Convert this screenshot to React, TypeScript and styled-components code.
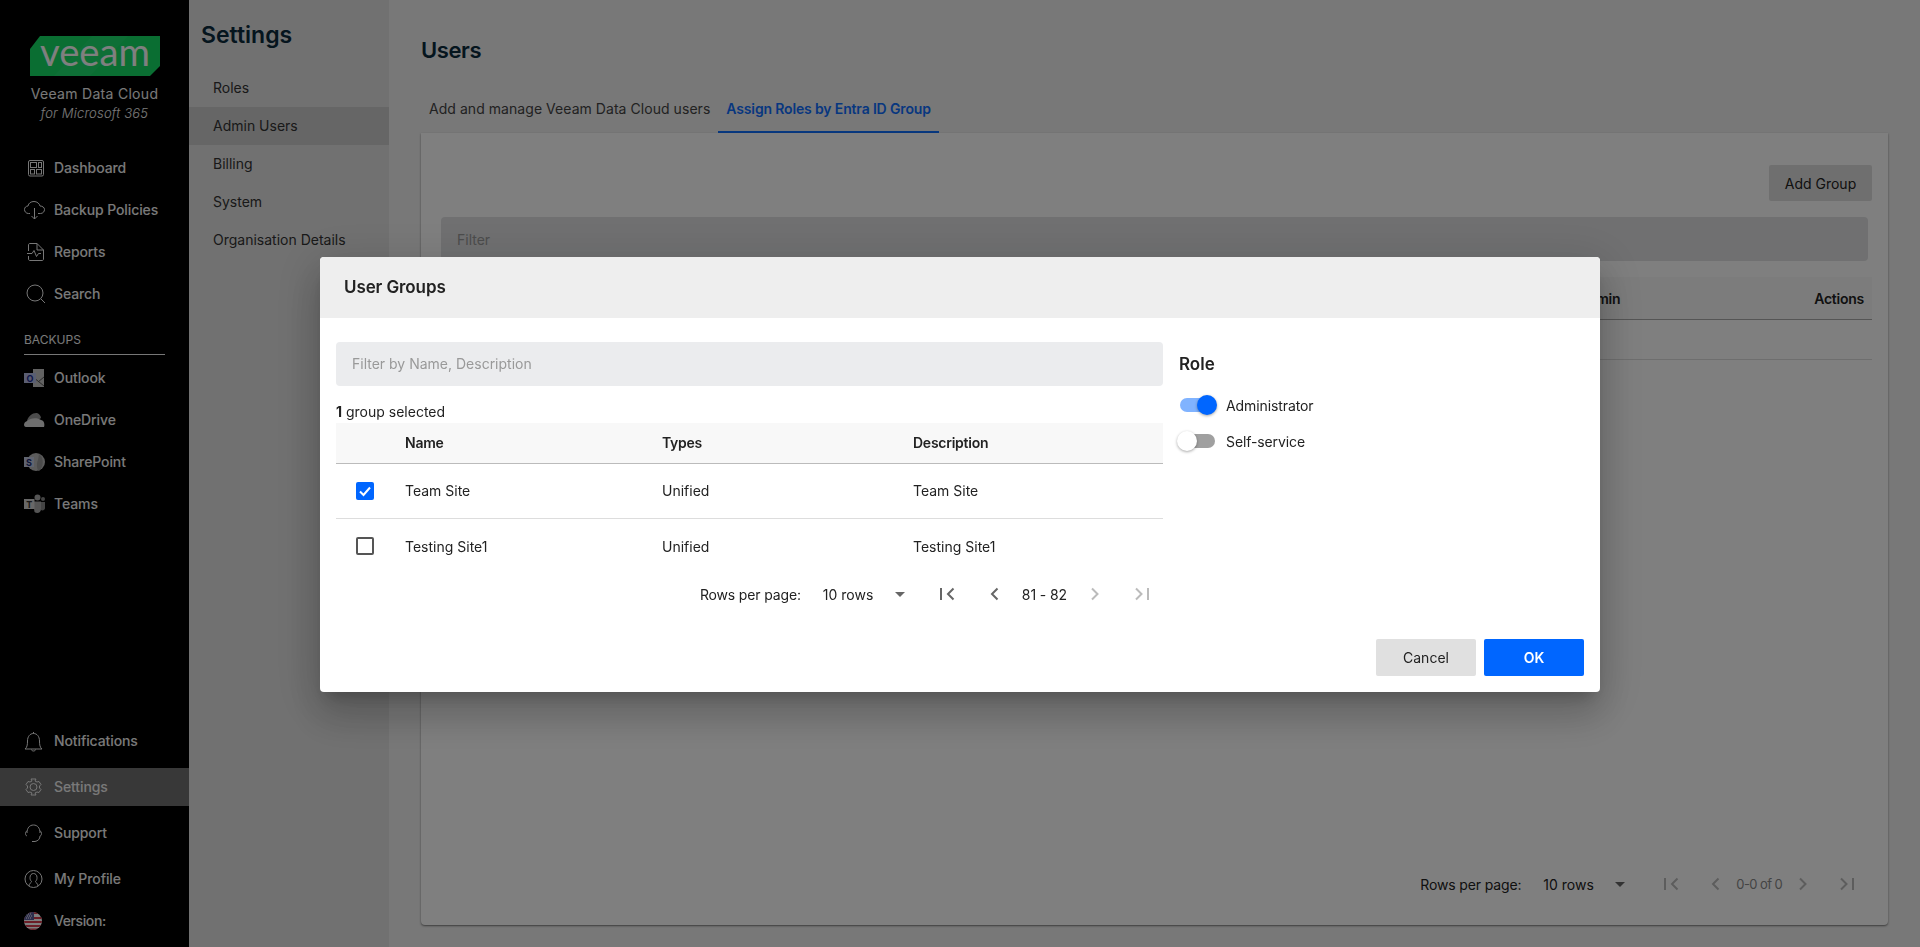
import React from 'react'
import styled, { createGlobalStyle } from 'styled-components'

const GlobalStyle = createGlobalStyle`
  html, body, #root {
    height: 100%;
    margin: 0;
  }
  body {
    overflow: hidden;
    font-family: Inter, "Noto Sans", "Liberation Sans", sans-serif;
    font-size: 14px;
    color: #222;
  }
  * {
    box-sizing: border-box;
  }
`

const Shell = styled.div`
  display: flex;
  height: 947px;
  background: #f0f0f0;
`

/* left black rail */
const Sidebar = styled.nav`
  display: flex;
  flex-direction: column;
  flex: 0 0 189px;
  background: #000;
  color: #f2f2f2;
`
const Brand = styled.div`
  display: flex;
  flex-direction: column;
  align-items: center;
  height: 147px;
  padding-top: 36px;
`
const LogoMark = styled.svg`
  display: block;
  overflow: visible;
`
const BrandTitle = styled.div`
  margin-top: 9px;
  font-size: 14px;
  line-height: 18px;
  letter-spacing: 0.3px;
`
const BrandSub = styled.div`
  font-size: 13px;
  line-height: 20px;
  font-style: italic;
  font-weight: 300;
  letter-spacing: 0.2px;
`
const NavRow = styled.a<{ $active?: boolean }>`
  display: flex;
  align-items: center;
  height: ${p => (p.$active ? '38px' : '42px')};
  padding: 0 0 1px 24px;
  font-size: 14px;
  font-weight: 500;
  letter-spacing: -0.1px;
  background: ${p => (p.$active ? '#707070' : 'transparent')};
`
const NavIcon = styled.span`
  display: flex;
  flex: 0 0 30px;
  svg {
    display: block;
    fill: none;
    stroke: #eee;
    stroke-width: 1;
  }
`
const SectionLabel = styled.div`
  display: flex;
  align-items: flex-end;
  height: 40px;
  margin: 0 24px 2px;
  padding-bottom: 6px;
  border-bottom: 1px solid #eee;
  font-size: 12px;
  line-height: 16px;
`
const BottomNav = styled.div`
  display: flex;
  flex-direction: column;
  gap: 8px;
  margin-top: auto;
  padding-bottom: 7px;
  ${NavRow} {
    height: 38px;
  }
`
const VersionRow = styled(NavRow)`
  margin-top: -4px;
  letter-spacing: -0.4px;
`

/* settings sub nav */
const SubNav = styled.aside`
  flex: 0 0 200px;
  background: #e2e2e2;
`
const SubTitle = styled.h2`
  height: 69px;
  margin: 0;
  padding: 19px 0 0 12px;
  font-size: 23px;
  line-height: 32px;
  font-weight: 600;
  color: #0a2a3c;
`
const SubItem = styled.div<{ $active?: boolean }>`
  display: flex;
  align-items: center;
  height: 38px;
  padding: 0 0 2px 24px;
  color: #333;
  background: ${p => (p.$active ? '#cccccc' : 'transparent')};
`

/* page body behind the dialog */
const Main = styled.main`
  display: flex;
  flex-direction: column;
  flex: 1;
  min-width: 0;
  padding: 35px 32px 22px 32px;
`
const PageTitle = styled.h1`
  height: 32px;
  margin: 0 0 18px;
  padding-bottom: 1px;
  font-size: 22px;
  line-height: 31px;
  font-weight: 600;
  letter-spacing: -0.4px;
  color: #0a2a3c;
`
const Tabs = styled.div`
  display: flex;
`
const Tab = styled.div<{ $active?: boolean }>`
  display: flex;
  align-items: center;
  height: 48px;
  padding: 0 8px;
  font-weight: ${p => (p.$active ? 600 : 400)};
  letter-spacing: ${p => (p.$active ? '-0.15px' : '0.05px')};
  color: ${p => (p.$active ? '#0f6fff' : '#444')};
  border-bottom: 2px solid ${p => (p.$active ? '#0f70ff' : 'transparent')};
`
const Card = styled.section`
  display: flex;
  flex-direction: column;
  flex: 1;
  padding: 32px 16px 0 20px;
  background: #fff;
  border-radius: 0 0 4px 4px;
  box-shadow: 0 1px 2px rgba(0, 0, 0, 0.5);
`
const CardActions = styled.div`
  display: flex;
  justify-content: flex-end;
`
const GhostButton = styled.button`
  width: 103px;
  height: 36px;
  border: 0;
  border-radius: 2px;
  background: #dfdfdf;
  font: inherit;
  color: #222;
`
const PageFilter = styled.div`
  display: flex;
  align-items: center;
  height: 44px;
  margin: 16px 4px 16px 0;
  padding-left: 16px;
  border-radius: 4px;
  background: #e0e1e3;
  color: #999;
`
const PageTableHead = styled.div`
  display: flex;
  justify-content: flex-end;
  align-items: center;
  gap: 194px;
  height: 43px;
  padding-right: 8px;
  background: #f8f8f8;
  border-bottom: 1px solid #aaa;
  font-weight: 600;
  letter-spacing: -0.25px;
`
const PageTableRow = styled.div`
  height: 40px;
  border-bottom: 1px solid #ddd;
`
const CardFooter = styled.div`
  display: flex;
  justify-content: flex-end;
  margin-top: auto;
  padding: 0 15px 21px 0;
`

/* pagination, used in the card and in the dialog */
const Pager = styled.div<{ $iconGap: number; $rangeGap: number; $caretGap: number }>`
  display: flex;
  align-items: center;
  height: 40px;
  --icon-gap: ${p => p.$iconGap}px;
  --range-gap: ${p => p.$rangeGap}px;
  --caret-gap: ${p => p.$caretGap}px;
`
const PagerLabel = styled.span`
  margin-right: 22px;
  letter-spacing: -0.15px;
`
const PagerValue = styled.span`
  width: 72px;
`
const Caret = styled.span`
  width: 0;
  height: 0;
  margin-right: var(--caret-gap);
  border-left: 5px solid transparent;
  border-right: 5px solid transparent;
  border-top: 5px solid #666;
`
const PagerRange = styled.span<{ $muted?: boolean }>`
  margin: 0 var(--range-gap);
  font-size: ${p => (p.$muted ? '13px' : '14px')};
  letter-spacing: ${p => (p.$muted ? '-0.6px' : '-0.1px')};
  color: ${p => (p.$muted ? '#888' : '#222')};
`
const PagerIcon = styled.svg<{ $gapLeft?: boolean }>`
  display: block;
  flex: 0 0 20px;
  margin-left: ${p => (p.$gapLeft ? 'var(--icon-gap)' : '0')};
  fill: none;
  stroke-width: 2;
`

/* dialog */
const Overlay = styled.div`
  position: fixed;
  inset: 0;
  display: flex;
  align-items: center;
  justify-content: center;
  padding-top: 2px;
  background: rgba(0, 0, 0, 0.5);
`
const Dialog = styled.div`
  width: 1280px;
  overflow: hidden;
  background: #fff;
  border-radius: 4px;
  box-shadow: 0 11px 15px -7px rgba(0, 0, 0, 0.2), 0 24px 38px 3px rgba(0, 0, 0, 0.14),
    0 9px 46px 8px rgba(0, 0, 0, 0.12);
`
const DialogHeader = styled.header`
  display: flex;
  align-items: center;
  height: 61px;
  padding: 0 0 1px 24px;
  background: #eee;
  font-size: 17px;
  font-weight: 600;
  letter-spacing: -0.1px;
`
const DialogBody = styled.div`
  display: flex;
  gap: 16px;
  padding: 24px 16px 0;
`
const LeftColumn = styled.div`
  flex: 0 0 827px;
`
const FilterInput = styled.div`
  display: flex;
  align-items: center;
  height: 44px;
  padding: 0 0 1px 16px;
  border-radius: 4px;
  background: #ebecee;
  color: #999;
`
const SelectedCount = styled.div`
  height: 37px;
  padding-top: 17px;
  line-height: 18px;
  b {
    font-weight: 700;
  }
`
const GridRow = styled.div<{ $head?: boolean; $last?: boolean }>`
  display: grid;
  grid-template-columns: 69px 257px 251px 1fr;
  align-items: center;
  height: ${p => (p.$head ? '41px' : '55px')};
  padding-bottom: 1px;
  font-weight: ${p => (p.$head ? 600 : 400)};
  letter-spacing: ${p => (p.$head ? '-0.25px' : '0')};
  background: ${p => (p.$head ? '#f8f8f8' : 'transparent')};
  border-bottom: ${p => (p.$last ? '0' : p.$head ? '1px solid #bbb' : '1px solid #ddd')};
`
const Check = styled.span<{ $checked?: boolean }>`
  display: flex;
  align-items: center;
  justify-content: center;
  width: 18px;
  height: 18px;
  margin-left: 20px;
  border-radius: 2px;
  border: ${p => (p.$checked ? '0' : '2px solid #555')};
  background: ${p => (p.$checked ? '#0066ff' : '#fff')};
`
const DialogPager = styled.div`
  display: flex;
  justify-content: flex-end;
  padding-right: 11px;
`
const RoleColumn = styled.div`
  flex: 1;
`
const RoleTitle = styled.h3`
  display: flex;
  align-items: center;
  height: 44px;
  margin: 0 0 1px;
  font-size: 17px;
  font-weight: 600;
`
const RoleRow = styled.label`
  display: flex;
  align-items: center;
  height: 36px;
  letter-spacing: -0.1px;
`
const Switch = styled.span<{ $on?: boolean }>`
  position: relative;
  flex: 0 0 35px;
  height: 14px;
  margin: 0 11px 0 1px;
  border-radius: 7px;
  background: ${p => (p.$on ? '#80b3ff' : '#a0a0a0')};
  &::after {
    content: '';
    position: absolute;
    top: -3px;
    left: ${p => (p.$on ? '17px' : '-3px')};
    width: 20px;
    height: 20px;
    border-radius: 50%;
    background: ${p => (p.$on ? '#0066ff' : '#fff')};
    box-shadow: 0 1px 3px rgba(0, 0, 0, 0.35);
  }
`
const DialogFooter = styled.footer`
  display: flex;
  justify-content: flex-end;
  gap: 8px;
  padding: 25px 16px 16px;
`
const DialogButton = styled.button<{ $primary?: boolean }>`
  width: 100px;
  height: 37px;
  border: 0;
  border-radius: 2px;
  font: inherit;
  font-weight: ${p => (p.$primary ? 600 : 400)};
  color: ${p => (p.$primary ? '#fff' : '#222')};
  background: ${p => (p.$primary ? '#0066ff' : '#e0e0e0')};
`

const Icon = ({ children }: { children: React.ReactNode }) => (
  <NavIcon>
    <svg width="24" height="24" viewBox="0 0 24 24">
      {children}
    </svg>
  </NavIcon>
)

const VeeamLogo = () => (
  <LogoMark width="130" height="40" viewBox="0 0 130 40">
    <path d="M10 0 H130 V30 L120 40 H0 V13 Z" fill="#14dc64" />
    <path d="M62 0 H98 L60 40 H24 Z" fill="#2ee47a" opacity="0.35" />
    <text x="65" y="30" textAnchor="middle" textLength="110" lengthAdjust="spacingAndGlyphs"
      fontFamily="Lato, sans-serif" fontSize="38" fill="#fff">veeam</text>
  </LogoMark>
)

const PageIcon = ({ kind, muted, gapLeft }: { kind: 'first' | 'prev' | 'next' | 'last'; muted?: boolean; gapLeft?: boolean }) => {
  const d = {
    first: 'M4 4 V16 M16.5 4.5 L11 10 L16.5 15.5',
    prev: 'M13.5 4.5 L8 10 L13.5 15.5',
    next: 'M7 4.5 L12.5 10 L7 15.5',
    last: 'M4 4.5 L9.5 10 L4 15.5 M16 4 V16',
  }[kind]
  return (
    <PagerIcon $gapLeft={gapLeft} width="20" height="20" viewBox="0 0 20 20" stroke={muted ? '#bbb' : '#666'}>
      <path d={d} />
    </PagerIcon>
  )
}

export default function App() {
  return (
    <>
      <GlobalStyle />
      <Shell>
        <Sidebar>
          <Brand>
            <VeeamLogo />
            <BrandTitle>Veeam Data Cloud</BrandTitle>
            <BrandSub>for Microsoft 365</BrandSub>
          </Brand>
          <NavRow>
            <Icon>
              <rect x="4.5" y="4.5" width="15" height="15.5" rx="1.5" />
              <rect x="6.5" y="6.5" width="6" height="5" />
              <rect x="14.5" y="6.5" width="3" height="5" />
              <rect x="6.5" y="13.5" width="4" height="4.5" />
              <rect x="12.5" y="13.5" width="5" height="4.5" />
            </Icon>
            Dashboard
          </NavRow>
          <NavRow>
            <Icon>
              <path d="M6 15.5 H4.5 C2 15.5 .5 13.5 .5 11.5 C.5 9.5 2 8 4 8 C4.5 5 7 3.5 10 3.5 C13 3.5 15.5 5.5 16 8 C18.5 8 20.5 9.5 20.5 11.5 C20.5 13.5 19 15.5 16.5 15.5 H14 M10.5 10 V21 M7.5 18 L10.5 21 L13.5 18" />
            </Icon>
            Backup Policies
          </NavRow>
          <NavRow>
            <Icon>
              <path d="M4.5 11 V5 C4.5 4 5 3.5 6 3.5 H13 L19.5 10 V19 C19.5 20 19 20.5 18 20.5 H6 C5 20.5 4.5 20 4.5 19 V16 M13 3.5 V10 H19.5 M3 13.5 H8 L10 10.5 L12.5 16.5 L14.5 13.5 H17" />
            </Icon>
            Reports
          </NavRow>
          <NavRow>
            <Icon>
              <circle cx="11" cy="11" r="8" />
              <path d="M17 17 L21 21" />
            </Icon>
            Search
          </NavRow>
          <SectionLabel>BACKUPS</SectionLabel>
          <NavRow>
            <Icon>
              <path d="M9 3 H20 V21 H9 Z" fill="#c4c4c4" stroke="none" />
              <path d="M9 11 L20 20 M20 11 L14 16" stroke="#555" />
              <rect x="0" y="7" width="12" height="10" fill="#b4bce4" stroke="none" />
              <text x="6" y="15.5" textAnchor="middle" fontSize="9" fontWeight="700" fill="#1a2a90" stroke="none" fontFamily="Inter, sans-serif">O</text>
            </Icon>
            Outlook
          </NavRow>
          <NavRow>
            <Icon>
              <path d="M3 13 C4 8 9 4.5 13 5 C15 5.5 17 8 17 10 L8 16 Z" fill="#999" stroke="none" />
              <path d="M2 19 C-1 19 -.5 14 3 13 C6 10 13 9 17 12 C20 12 21 16 20 19 Z" fill="#dcdcdc" stroke="none" />
            </Icon>
            OneDrive
          </NavRow>
          <NavRow>
            <Icon>
              <circle cx="12" cy="12" r="9" fill="#b8b8b8" stroke="none" />
              <path d="M15 4 C20 7 20 17 15 21 C13 20 12 14 14 10 Z" fill="#999" stroke="none" />
              <rect x="0" y="7" width="10" height="10" fill="#c0c8e0" stroke="none" />
              <text x="5" y="15.5" textAnchor="middle" fontSize="9" fontWeight="700" fill="#1a2a70" stroke="none" fontFamily="Inter, sans-serif">S</text>
            </Icon>
            SharePoint
          </NavRow>
          <NavRow>
            <Icon>
              <circle cx="13.5" cy="5.5" r="3" fill="#aaa" stroke="none" />
              <circle cx="19" cy="7" r="2" fill="#888" stroke="none" />
              <path d="M9 9.5 H17 V17 C17 21 13 22 10.5 20 Z" fill="#aaa" stroke="none" />
              <path d="M17 10 H21 V16 C21 18 18.5 19 17 18 Z" fill="#888" stroke="none" />
              <rect x="0" y="7" width="10.5" height="10" fill="#d0d0d0" stroke="none" />
              <text x="5.2" y="15.5" textAnchor="middle" fontSize="9" fontWeight="700" fill="#333" stroke="none" fontFamily="Inter, sans-serif">T</text>
            </Icon>
            Teams
          </NavRow>
          <BottomNav>
            <NavRow>
              <Icon>
                <path d="M1 20 H18 C16 18.5 15.5 16 15.5 12 C15.5 7.5 13 4.5 9.5 4.5 C6 4.5 3.5 7.5 3.5 12 C3.5 16 3 18.5 1 20 Z M7.5 20.5 C7.5 22.5 11.5 22.5 11.5 20.5 M9.5 4.5 V3" />
              </Icon>
              Notifications
            </NavRow>
            <NavRow $active>
              <Icon>
                <path d="M7 4 L8 6 L6 7 L4 6.5 L2 9.5 L3.5 11 V13 L2 14.5 L4 17.5 L6 17 L8 18 L7 20 H12 L11 18 L13 17 L15 17.5 L17 14.5 L15.5 13 V11 L17 9.5 L15 6.5 L13 7 L11 6 L12 4 Z" strokeLinejoin="round" />
                <circle cx="9.5" cy="12" r="3.5" />
              </Icon>
              Settings
            </NavRow>
            <NavRow>
              <Icon>
                <path d="M3 12 C3 7 5.5 4 9.5 4 C13.5 4 16 7 16 12 M3 10 C1 10.5 1 14.5 3 15 M16 10 C18 10.5 18 14.5 16 15 M16 15 C16 18 14 20 11 20.5 M8 20.5 H11" />
              </Icon>
              Support
            </NavRow>
            <NavRow>
              <Icon>
                <circle cx="9.5" cy="12" r="8.5" />
                <path d="M5 19 C5 16 7.5 16 7.5 14.5 C6 13 6 11.5 6 10.5 C6 8 7.5 6.5 9.5 6.5 C11.5 6.5 13 8 13 10.5 C13 11.5 13 13 11.5 14.5 C11.5 16 14 16 14 19" />
              </Icon>
              My Profile
            </NavRow>
            <VersionRow>
              <Icon>
                <defs>
                  <clipPath id="flag-clip">
                    <circle cx="9" cy="12" r="9" />
                  </clipPath>
                </defs>
                <g clipPath="url(#flag-clip)" stroke="none">
                  <rect x="0" y="3" width="18" height="18" fill="#fff" />
                  <rect x="0" y="3" width="18" height="2" fill="#d83a4c" />
                  <rect x="0" y="8" width="18" height="2" fill="#d83a4c" />
                  <rect x="0" y="12" width="18" height="2" fill="#d83a4c" />
                  <rect x="0" y="16" width="18" height="2" fill="#d83a4c" />
                  <rect x="0" y="19.5" width="18" height="2" fill="#d83a4c" />
                  <rect x="0" y="3" width="10" height="8" fill="#5a5c9a" />
                  <path d="M2 5 H8 M3 7 H9 M2 9 H8" stroke="#fff" strokeWidth="1" strokeDasharray="1 1" />
                </g>
              </Icon>
              Version:
            </VersionRow>
          </BottomNav>
        </Sidebar>

        <SubNav>
          <SubTitle>Settings</SubTitle>
          <SubItem>Roles</SubItem>
          <SubItem $active>Admin Users</SubItem>
          <SubItem>Billing</SubItem>
          <SubItem>System</SubItem>
          <SubItem>Organisation Details</SubItem>
        </SubNav>

        <Main>
          <PageTitle>Users</PageTitle>
          <Tabs>
            <Tab>Add and manage Veeam Data Cloud users</Tab>
            <Tab $active>Assign Roles by Entra ID Group</Tab>
          </Tabs>
          <Card>
            <CardActions>
              <GhostButton>Add Group</GhostButton>
            </CardActions>
            <PageFilter>Filter</PageFilter>
            <PageTableHead>
              <span>Admin</span>
              <span>Actions</span>
            </PageTableHead>
            <PageTableRow />
            <CardFooter>
              <Pager $iconGap={24} $rangeGap={11} $caretGap={36}>
                <PagerLabel>Rows per page:</PagerLabel>
                <PagerValue>10 rows</PagerValue>
                <Caret />
                <PageIcon kind="first" muted />
                <PageIcon kind="prev" muted gapLeft />
                <PagerRange $muted>0-0 of 0</PagerRange>
                <PageIcon kind="next" muted />
                <PageIcon kind="last" muted gapLeft />
              </Pager>
            </CardFooter>
          </Card>
        </Main>
      </Shell>

      <Overlay>
        <Dialog>
          <DialogHeader>User Groups</DialogHeader>
          <DialogBody>
            <LeftColumn>
              <FilterInput>Filter by Name, Description</FilterInput>
              <SelectedCount>
                <b>1</b> group selected
              </SelectedCount>
              <GridRow $head>
                <span />
                <span>Name</span>
                <span>Types</span>
                <span>Description</span>
              </GridRow>
              <GridRow>
                <Check $checked>
                  <svg width="14" height="14" viewBox="0 0 14 14" fill="none" stroke="#fff" strokeWidth="2">
                    <path d="M2 7.5 L5.5 11 L12 3.5" />
                  </svg>
                </Check>
                <span>Team Site</span>
                <span>Unified</span>
                <span>Team Site</span>
              </GridRow>
              <GridRow $last>
                <Check />
                <span>Testing Site1</span>
                <span>Unified</span>
                <span>Testing Site1</span>
              </GridRow>
              <DialogPager>
                <Pager $iconGap={27} $rangeGap={18} $caretGap={32}>
                  <PagerLabel>Rows per page:</PagerLabel>
                  <PagerValue>10 rows</PagerValue>
                  <Caret />
                  <PageIcon kind="first" />
                  <PageIcon kind="prev" gapLeft />
                  <PagerRange>81 - 82</PagerRange>
                  <PageIcon kind="next" muted />
                  <PageIcon kind="last" muted gapLeft />
                </Pager>
              </DialogPager>
            </LeftColumn>
            <RoleColumn>
              <RoleTitle>Role</RoleTitle>
              <RoleRow>
                <Switch $on />
                Administrator
              </RoleRow>
              <RoleRow>
                <Switch />
                Self-service
              </RoleRow>
            </RoleColumn>
          </DialogBody>
          <DialogFooter>
            <DialogButton>Cancel</DialogButton>
            <DialogButton $primary>OK</DialogButton>
          </DialogFooter>
        </Dialog>
      </Overlay>
    </>
  )
}
